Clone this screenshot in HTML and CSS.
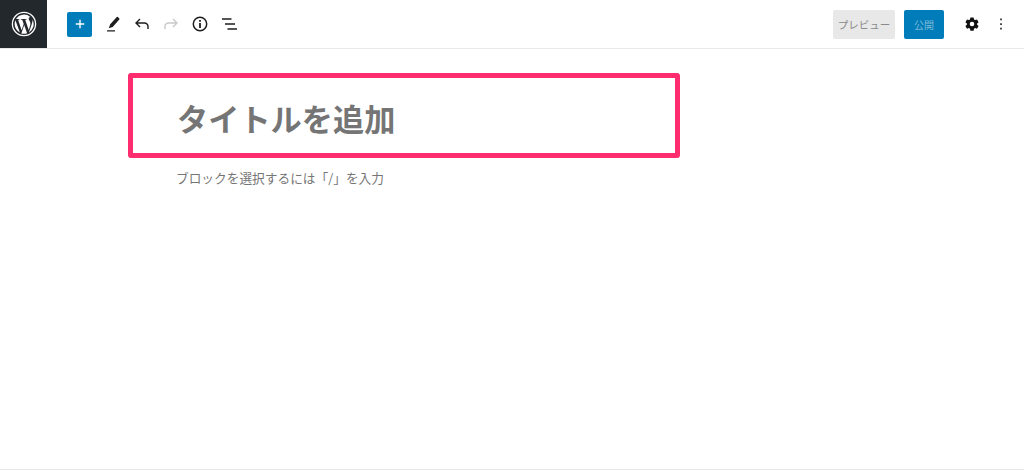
FILE: index.html
```html
<!DOCTYPE html>
<html lang="ja">
<head>
<meta charset="utf-8">
<title>タイトルを追加</title>
<link rel="stylesheet" href="styles.css">
</head>
<body>
<div class="page">
  <header class="toolbar">
    <div class="wp-logo">
      <svg width="26" height="26" viewBox="0 0 26 26"><circle cx="13" cy="13" r="11.6" fill="none" stroke="#fff" stroke-width="1.3"/><path fill="#fff" d="M3.6 13c0 3.7 2.2 6.9 5.3 8.5L4.4 9.2A9.4 9.4 0 0 0 3.6 13zm15.8-.5c0-1.2-.4-2-.8-2.600-.5-.8-.9-1.400-.9-2.200 0-.8.6-1.600 1.500-1.600h.1A9.400 9.400 0 0 0 5 8h.6c1 0 2.500-.1 2.500-.1.500 0 .6.700.1.800 0 0-.5.100-1.100.1l3.500 10.400 2.100-6.300-1.500-4.100c-.5 0-1-.1-1-.1-.5 0-.5-.8 0-.8 0 0 1.600.1 2.500.1 1 0 2.500-.1 2.500-.1.500 0 .6.700.1.800 0 0-.5.100-1.100.1l3.500 10.300 1-3.200c.4-1.300.7-2.200.7-3zM13.200 14l-2.900 8.400a9.500 9.500 0 0 0 5.800-.2l-.1-.1zm8.200-5.400c0 .3.100.6.100 1 0 1-.2 2.100-.7 3.400l-2.900 8.400A9.400 9.400 0 0 0 21.400 8.600z"/></svg>
    </div>
    <div class="tools">
      <button class="add-btn" type="button">
        <svg width="24" height="24" viewBox="0 0 24 24"><path fill="#fff" d="M11.300 7.800h1.400v3.500h3.500v1.400h-3.500v3.500h-1.400v-3.500H7.800v-1.400h3.500z"/></svg>
      </button>
      <span class="tool tool-edit">
        <svg width="24" height="24" viewBox="0 0 24 24"><path fill="#1e1e1e" d="M18.300 6.400 16.900 5a.8.800 0 0 0-1.100 0L9.200 12.300l-1.400 3.900 3.900-1.300 6.600-7.400a.8.800 0 0 0 0-1.100zM6 18.300h8v1.300H6z"/></svg>
      </span>
      <span class="tool tool-undo">
        <svg width="24" height="24" viewBox="0 0 24 24"><path fill="none" stroke="#1e1e1e" stroke-width="1.400" d="M10 7 6 11l4 4M6 11h8.500a3.500 3.500 0 0 1 3.500 3.500V17"/></svg>
      </span>
      <span class="tool tool-redo">
        <svg width="24" height="24" viewBox="0 0 24 24"><path fill="none" stroke="#c9c9c9" stroke-width="1.400" d="M14 7l4 4-4 4M18 11H9.500A3.500 3.500 0 0 0 6 14.500V17"/></svg>
      </span>
      <span class="tool tool-info">
        <svg width="24" height="24" viewBox="0 0 24 24"><circle cx="12" cy="12" r="6.700" fill="none" stroke="#1e1e1e" stroke-width="1.500"/><path fill="#1e1e1e" d="M11.100 11h1.800v5h-1.800zM11.100 8h1.800v1.800h-1.800z"/></svg>
      </span>
      <span class="tool tool-list">
        <svg width="24" height="24" viewBox="0 0 24 24"><path fill="#1e1e1e" d="M5 6.300h9.500v1.400H5zM8 11.300h10v1.400H8zM10.500 16.300H20v1.400h-9.500z"/></svg>
      </span>
    </div>
    <div class="actions">
      <button class="preview-btn" type="button">プレビュー</button>
      <button class="publish-btn" type="button">公開</button>
      <span class="tool tool-gear">
        <svg width="24" height="24" viewBox="0 0 24 24"><path fill="#111" fill-rule="evenodd" d="M10.400 5.500h3.200l.4 2 1.100.6 1.900-.7 1.600 2.800-1.500 1.300v1.200l1.500 1.300-1.600 2.800-1.900-.7-1.100.6-.4 2h-3.200l-.4-2-1.100-.6-1.900.7-1.600-2.800 1.500-1.300v-1.200L5.400 10.200 7 7.400l1.900.7 1.100-.6zM12 9.700a2.300 2.300 0 1 0 0 4.600 2.300 2.300 0 0 0 0-4.600z"/></svg>
      </span>
      <span class="tool tool-more">
        <svg width="24" height="24" viewBox="0 0 24 24"><path fill="#1e1e1e" d="M11.200 6.500h1.600v1.700h-1.600zM11.200 11.200h1.600v1.700h-1.600zM11.200 15.800h1.600v1.700h-1.600z"/></svg>
      </span>
    </div>
  </header>
  <main class="editor">
    <div class="title-box"><h1 class="title">タイトルを追加</h1></div>
    <p class="hint">ブロックを選択するには「/」を入力</p>
  </main>
</div>
</body>
</html>
```

FILE: styles.css
```css
* { box-sizing: border-box; }
html, body { margin: 0; padding: 0; background: #fff; }
body { font-family: "Noto Sans CJK JP", "Noto Sans", sans-serif; }
.page {
  width: 1024px;
  height: 470px;
  display: flex;
  flex-direction: column;
  border-bottom: 1px solid #e8e8e8;
  overflow: hidden;
}
.toolbar {
  height: 49px;
  flex: none;
  display: flex;
  align-items: center;
  border-bottom: 1px solid #e8e8e8;
}
.wp-logo {
  width: 47px;
  height: 48px;
  flex: none;
  background: #23282d;
  display: flex;
  align-items: center;
  justify-content: center;
}
.tools { display: flex; align-items: center; margin-left: 20px; }
.tool { width: 24px; height: 24px; display: block; flex: none; }
.tool svg { display: block; }
.add-btn {
  width: 25px;
  height: 25px;
  padding: 0;
  border: 0;
  border-radius: 2px;
  background: #007cba;
  display: flex;
  align-items: center;
  justify-content: center;
}
.tool-edit { margin-left: 9px; }
.tool-undo { margin-left: 5px; }
.tool-redo { margin-left: 5px; }
.tool-info { margin-left: 5px; }
.tool-list { margin-left: 5px; }
.actions { display: flex; align-items: center; margin-left: auto; margin-right: 11px; }
.preview-btn, .publish-btn {
  font-family: inherit;
  height: 29px;
  padding: 0;
  border-radius: 2px;
}
.preview-btn {
  width: 62px;
  border: 0;
  font-size: 10.500px;
  background: #e8e8e8;
  color: #8a8a8a;
}
.publish-btn {
  width: 40px;
  margin-left: 9px;
  border: 0;
  font-size: 10px;
  background: #007cba;
  color: #7db9d8;
}
.tool-gear { margin-left: 16px; }
.tool-more { margin-left: 5px; }
.editor { flex: 1; padding: 24px 0 0 128px; }
.title-box {
  width: 552px;
  height: 85px;
  border: 5px solid #ff2d6f;
  border-radius: 3px;
  display: flex;
  align-items: center;
  padding-left: 44px;
}
.title {
  margin: 4px 0 0;
  font-size: 31.200px;
  line-height: 1.2;
  font-weight: 700;
  color: #757575;
}
.hint {
  margin: 11px 0 0 48px;
  font-size: 12.700px;
  line-height: 18px;
  color: #757575;
}
```
